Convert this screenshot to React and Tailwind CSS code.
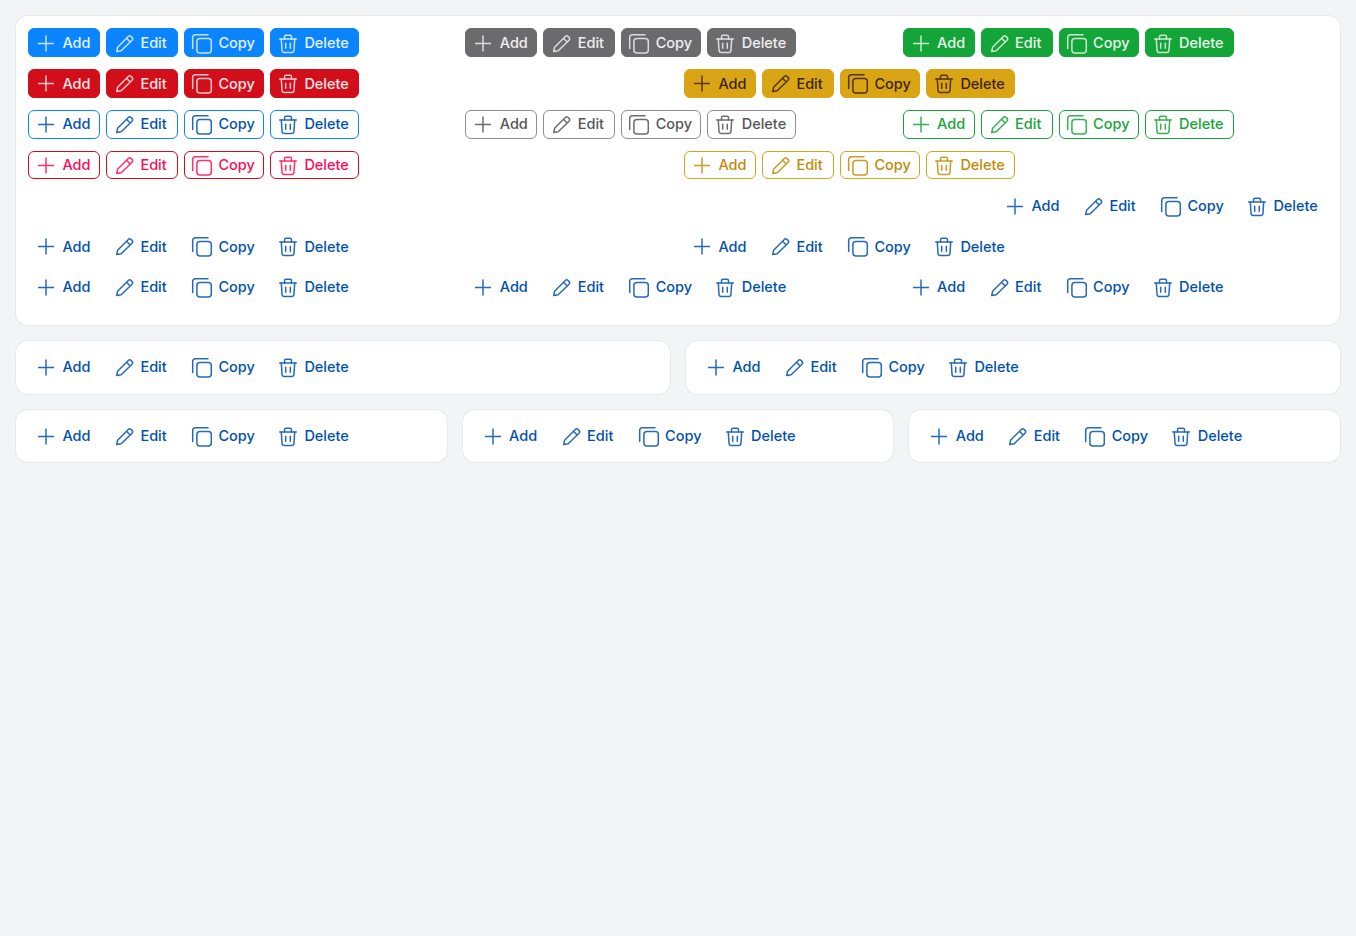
const Plus = () => (
  <svg width="20" height="20" viewBox="0 0 20 20" fill="none" stroke="currentColor" strokeWidth="1.5" className="shrink-0 overflow-visible opacity-85">
    <path d="M1 10.5H17M9 2.5V18.5" />
  </svg>
);
const Pencil = () => (
  <svg width="20" height="20" viewBox="0 0 20 20" fill="none" stroke="currentColor" strokeWidth="1.5" strokeLinejoin="round" className="shrink-0 overflow-visible opacity-85">
    <path d="M1.7 18.6L2.6 14.2L13.3 3.5C14.1 2.7 15.3 2.7 16.1 3.5L17 4.4C17.8 5.2 17.8 6.4 17 7.2L6.2 17.8L1.7 18.6Z" />
    <path d="M11.5 5.3L15.2 9" />
  </svg>
);
const Copy = () => (
  <svg width="20" height="20" viewBox="0 0 20 20" fill="none" stroke="currentColor" strokeWidth="1.5" className="shrink-0 overflow-visible opacity-85">
    <rect x="3.9" y="5.5" width="14.4" height="14.4" rx="3" />
    <path d="M15 1.7H2.2C0.8 1.7 -0.3 2.8 -0.3 4.2V15.5" strokeLinecap="round" />
  </svg>
);
const Trash = () => (
  <svg width="20" height="20" viewBox="0 0 20 20" fill="none" stroke="currentColor" strokeWidth="1.5" strokeLinecap="round" strokeLinejoin="round" className="shrink-0 overflow-visible opacity-85">
    <path d="M0.7 6H17.3" />
    <path d="M5.5 6V3.7C5.5 2.8 6.1 2.2 7 2.2H11C11.9 2.2 12.5 2.8 12.5 3.7V6" />
    <path d="M2.3 6L3 17.3C3.1 18.6 4 19.5 5.3 19.5H12.7C14 19.5 14.9 18.6 15 17.3L15.7 6" />
    <path d="M6.7 10.3V15.3M11.3 10.3V15.3" />
  </svg>
);

const items = [
  ["Add", Plus, "w-[72px]"],
  ["Edit", Pencil, "w-[72px]"],
  ["Copy", Copy, "w-[80px]"],
  ["Delete", Trash, "w-[89px]"],
];

const Group = ({ btn }) => (
  <div className="flex gap-1.5">
    {items.map(([label, Icon, width]) => (
      <button
        key={label}
        className={`flex h-[28.75px] items-center gap-[5.4px] rounded-md border px-2 text-[14.5px] leading-none font-medium ${width} ${btn}`}
      >
        <Icon />
        <span className="pt-px">{label}</span>
      </button>
    ))}
  </div>
);

const S = {
  blue: "border-[#0a84ff] bg-[#0a84ff] text-white/90",
  gray: "border-[#6b6b6e] bg-[#6b6b6e] text-white/90",
  green: "border-[#14a538] bg-[#14a538] text-white/90",
  red: "border-[#d20e1a] bg-[#d20e1a] text-white/90",
  yellow: "border-[#d9a514] bg-[#d9a514] text-[#3d2200]",
  oblue: "border-[#0a84ff] bg-white text-[#0050ae]",
  ogray: "border-[#8e8e93] bg-white text-[#555558]",
  ogreen: "border-[#14a538] bg-white text-[#14a538]",
  ored: "border-[#d20e1a] bg-white text-[#ff0a54]",
  oyellow: "border-[#d9a514] bg-white text-[#c08a05]",
  ghost: "border-transparent bg-transparent text-[#0050ae]",
};

const Card = ({ children, className = "" }) => (
  <div className={`rounded-xl bg-white shadow-[0_0_0_1px_#e7e8eb] ${className}`}>{children}</div>
);

export default function App() {
  return (
    <div
      className="flex min-h-[936px] flex-col gap-4 bg-[#f3f4f6] p-4"
      style={{ fontFamily: "Inter, 'Liberation Sans', sans-serif" }}
    >
      <Card className="flex flex-col gap-3 px-3 pt-[12.25px] pb-[23.25px]">
        <div className="grid grid-cols-3 gap-3">
          <Group btn={S.blue} />
          <Group btn={S.gray} />
          <Group btn={S.green} />
        </div>
        <div className="grid grid-cols-2 gap-3">
          <Group btn={S.red} />
          <Group btn={S.yellow} />
        </div>
        <div className="grid grid-cols-3 gap-3">
          <Group btn={S.oblue} />
          <Group btn={S.ogray} />
          <Group btn={S.ogreen} />
        </div>
        <div className="grid grid-cols-2 gap-3">
          <Group btn={S.ored} />
          <Group btn={S.oyellow} />
        </div>
        <div className="flex justify-end">
          <Group btn={S.ghost} />
        </div>
        <div className="grid grid-cols-2 gap-3">
          <Group btn={S.ghost} />
          <Group btn={S.ghost} />
        </div>
        <div className="grid grid-cols-3 gap-3">
          <Group btn={S.ghost} />
          <Group btn={S.ghost} />
          <Group btn={S.ghost} />
        </div>
      </Card>
      <div className="grid grid-cols-2 gap-4">
        <Card className="p-3"><Group btn={S.ghost} /></Card>
        <Card className="p-3"><Group btn={S.ghost} /></Card>
      </div>
      <div className="grid grid-cols-3 gap-4">
        <Card className="p-3"><Group btn={S.ghost} /></Card>
        <Card className="p-3"><Group btn={S.ghost} /></Card>
        <Card className="p-3"><Group btn={S.ghost} /></Card>
      </div>
    </div>
  );
}
